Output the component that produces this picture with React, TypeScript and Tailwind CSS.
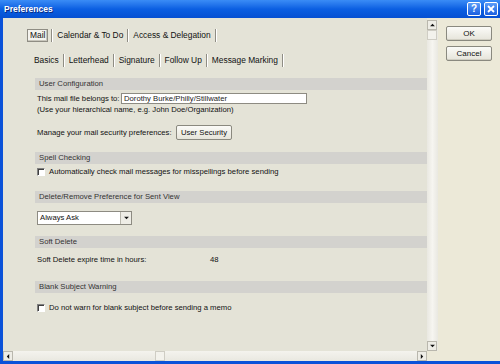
import React from 'react';

const font = { fontFamily: '"Liberation Sans", Arial, sans-serif' };

function Sep() {
  return <span className="mx-[3px] inline-block h-[13px] w-[2px] border-l border-r border-l-[#8f8d84] border-r-white" />;
}

function Tab({ label, active }: { label: string; active?: boolean }) {
  return (
    <span
      className={
        active
          ? 'flex h-[13px] items-center whitespace-nowrap border border-[#8f8d84] bg-[#f4f3ee] px-[2px] shadow-[inset_-1px_-1px_0_#c9c7bd]'
          : 'flex h-[13px] items-center whitespace-nowrap px-[1px]'
      }
    >
      {label}
    </span>
  );
}

function Header({ title, className }: { title: string; className?: string }) {
  return (
    <div className={'flex h-[12px] items-center whitespace-nowrap bg-[#d3d2ce] pl-[4px] text-[#333] ' + (className || '')}>
      {title}
    </div>
  );
}

function Checkbox() {
  return <span className="inline-block h-[8px] w-[8px] shrink-0 border-l border-t border-l-[#808080] border-t-[#808080] border-r border-b border-r-white border-b-white bg-white shadow-[inset_1px_1px_0_#404040]" />;
}

function Arrow({ dir }: { dir: 'up' | 'down' | 'left' | 'right' }) {
  const pts = {
    up: '1,4 4,1 7,4',
    down: '1,1 4,4 7,1',
    left: '4,1 1,4 4,7',
    right: '1,1 4,4 1,7',
  }[dir];
  const vert = dir === 'up' || dir === 'down';
  return (
    <svg width={vert ? 7 : 4} height={vert ? 4 : 7} viewBox={vert ? '0 0 8 5' : '0 0 5 8'}>
      <polygon points={pts} fill="#111" />
    </svg>
  );
}

function ScrollBtn({ dir }: { dir: 'up' | 'down' | 'left' | 'right' }) {
  return (
    <div className="flex h-[10px] w-[10px] shrink-0 items-center justify-center border border-[#b9b7ad] bg-[#eeede6]">
      <Arrow dir={dir} />
    </div>
  );
}

function DlgButton({ label }: { label: string }) {
  return (
    <div className="flex h-[15px] w-[46px] items-center justify-center rounded-[2px] border border-[#8a897f] bg-gradient-to-b from-[#fbfbf8] to-[#e6e4da] text-[8px] text-[#111] shadow-[inset_0_-1px_0_#d0cec2]">
      {label}
    </div>
  );
}

export default function App() {
  return (
    <div className="flex h-[364px] w-[500px] flex-col overflow-hidden bg-[#ece9d8] text-[7.7px] text-[#111]" style={font}>
      {/* title bar */}
      <div className="flex h-[18px] shrink-0 items-center justify-between bg-gradient-to-b from-[#3a8cf6] via-[#0b5fe2] to-[#0650d2] pl-[4px] pr-[2px]">
        <span className="text-[8.5px] font-bold text-white [text-shadow:1px_1px_0_#0a2a80]">Preferences</span>
        <div className="flex gap-[3px]">
          <div className="flex h-[14px] w-[14px] items-center justify-center rounded-[2px] border border-white bg-gradient-to-b from-[#5b9cf8] to-[#1a5fe0] text-[10px] font-bold leading-none text-white">?</div>
          <div className="flex h-[14px] w-[14px] items-center justify-center rounded-[2px] border border-white bg-gradient-to-b from-[#5b9cf8] to-[#1a5fe0]">
            <svg width="8" height="8" viewBox="0 0 8 8">
              <path d="M1 1L7 7M7 1L1 7" stroke="white" strokeWidth="1.8" />
            </svg>
          </div>
        </div>
      </div>

      <div className="flex min-h-0 flex-1">
        <div className="w-[3px] shrink-0 bg-[#0a52d9]" />

        <div className="flex w-[435px] shrink-0 flex-col">
          <div className="flex min-h-0 flex-1">
            {/* main content */}
            <div className="w-[424px] shrink-0 bg-[#e4e3d7]">
              <div className="ml-[24px] mt-[11px] flex items-center text-[8.4px]">
                <Tab label="Mail" active />
                <Sep />
                <Tab label="Calendar & To Do" />
                <Sep />
                <Tab label="Access & Delegation" />
                <Sep />
              </div>
              <div className="ml-[30px] mt-[12px] flex items-center text-[8.4px]">
                <Tab label="Basics" />
                <Sep />
                <Tab label="Letterhead" />
                <Sep />
                <Tab label="Signature" />
                <Sep />
                <Tab label="Follow Up" />
                <Sep />
                <Tab label="Message Marking" />
                <Sep />
              </div>

              <div className="ml-[32px] whitespace-nowrap">
                <Header title="User Configuration" className="mt-[11px]" />
                <div className="mt-[3px] flex h-[11px] items-center pl-[2px]">
                  <span className="w-[84px] shrink-0">This mail file belongs to:</span>
                  <div className="flex h-[11px] w-[186px] shrink-0 items-center border border-[#8d8b82] bg-white pl-[2px] text-[#222]">
                    Dorothy Burke/Philly/Stillwater
                  </div>
                </div>
                <div className="mt-[1px] h-[10px] pl-[2px] leading-[10px]">(Use your hierarchical name, e.g. John Doe/Organization)</div>
                <div className="mt-[10px] flex h-[15px] items-end pl-[2px]">
                  <span className="mb-[1px] w-[139px] shrink-0">Manage your mail security preferences:</span>
                  <div className="flex h-[15px] w-[56px] shrink-0 items-center justify-center rounded-[2px] border border-[#8a897f] bg-gradient-to-b from-[#fbfbf8] to-[#e6e4da]">
                    User Security
                  </div>
                </div>

                <Header title="Spell Checking" className="mt-[12px]" />
                <div className="mt-[3px] flex h-[9px] items-center gap-[4px] pl-[2px]">
                  <Checkbox />
                  <span>Automatically check mail messages for misspellings before sending</span>
                </div>

                <Header title="Delete/Remove Preference for Sent View" className="mt-[15px]" />
                <div className="ml-[2px] mt-[8px] flex h-[14px] w-[95px] items-center justify-between border border-[#8d8b82] bg-white pl-[2px]">
                  <span>Always Ask</span>
                  <div className="flex h-[12px] w-[11px] items-center justify-center border-l border-[#b9b7ad] bg-[#eeede6]">
                    <Arrow dir="down" />
                  </div>
                </div>

                <Header title="Soft Delete" className="mt-[11px]" />
                <div className="mt-[7px] flex h-[10px] items-center pl-[2px]">
                  <span className="w-[173px] shrink-0">Soft Delete expire time in hours:</span>
                  <span>48</span>
                </div>

                <Header title="Blank Subject Warning" className="mt-[16px]" />
                <div className="mt-[10px] flex h-[9px] items-center gap-[4px] pl-[2px]">
                  <Checkbox />
                  <span>Do not warn for blank subject before sending a memo</span>
                </div>
              </div>
            </div>

            {/* vertical scrollbar */}
            <div className="mt-[2px] flex w-[11px] shrink-0 flex-col bg-gradient-to-r from-[#e9e8e1] via-[#f6f5f0] to-[#e9e8e1]">
              <ScrollBtn dir="up" />
              <div className="h-[10px] w-[10px] border border-[#cfcdc4] bg-[#f3f2ec]" />
              <div className="flex-1" />
              <ScrollBtn dir="down" />
            </div>
          </div>

          {/* horizontal scrollbar */}
          <div className="flex h-[10px] shrink-0">
            <div className="flex w-[424px] bg-gradient-to-b from-[#f4f3ee] to-[#e9e8e0]">
              <ScrollBtn dir="left" />
              <div className="ml-[142px] h-[10px] w-[10px] border border-[#cfcdc4] bg-[#f3f2ec]" />
              <div className="flex-1" />
              <ScrollBtn dir="right" />
            </div>
            <div className="flex-1 bg-[#ece9d8]" />
          </div>
        </div>

        {/* buttons panel */}
        <div className="flex flex-1 flex-col items-center gap-[5px] pt-[8px]">
          <DlgButton label="OK" />
          <DlgButton label="Cancel" />
        </div>
      </div>

      <div className="h-[3px] shrink-0 bg-[#0a52d9]" />
    </div>
  );
}
